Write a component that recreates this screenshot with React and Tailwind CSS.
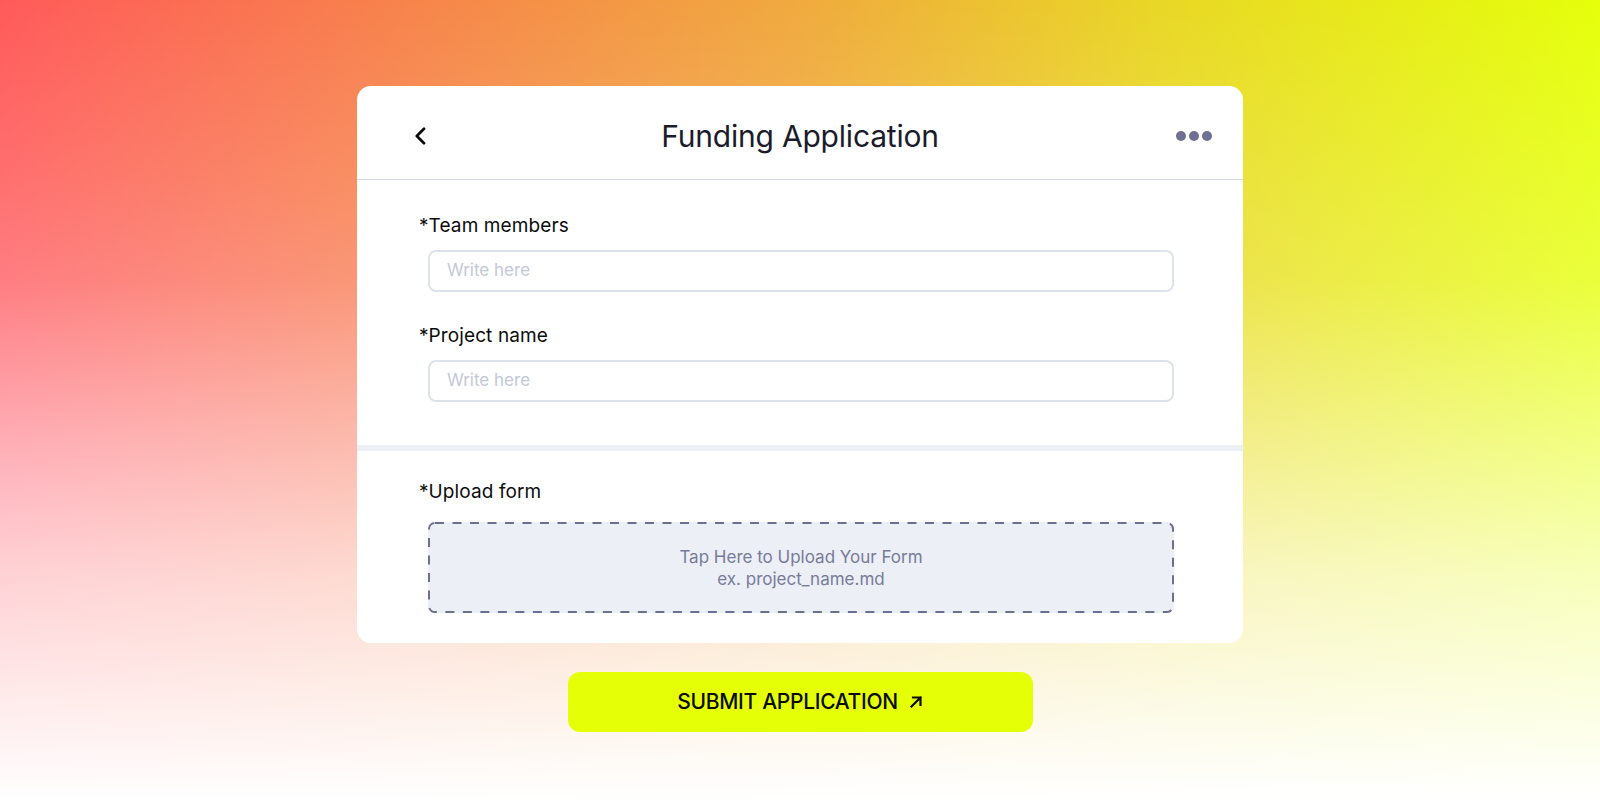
import React from "react";

function Chevron() {
  return (
    <svg width="12" height="18" viewBox="0 0 12 18" fill="none">
      <path d="M10 1.8 L2.8 9 L10 16.2" stroke="#0b0b0b" strokeWidth="2.7" strokeLinecap="round" strokeLinejoin="round" />
    </svg>
  );
}

function Dots() {
  return (
    <div className="flex items-center gap-[3px]">
      <span className="block w-[10px] h-[10px] rounded-full bg-[#6e7192]" />
      <span className="block w-[10px] h-[10px] rounded-full bg-[#6e7192]" />
      <span className="block w-[10px] h-[10px] rounded-full bg-[#6e7192]" />
    </div>
  );
}

function Arrow() {
  return (
    <svg width="14" height="14" viewBox="0 0 14 14" fill="none">
      <path d="M2.5 11.5 L11.5 2.5 M4 2.5 H11.5 V10" stroke="#0b0b0b" strokeWidth="2.2" strokeLinecap="square" />
    </svg>
  );
}

function Field({ label, top }) {
  return (
    <div className={top}>
      <div className="text-[19px] leading-[24px] font-normal tracking-[0.1px] text-[#0c0c0c]">{label}</div>
      <div className="mt-[12px] ml-[9px] w-[746px] h-[42px] rounded-[8px] border-2 border-[#dde2ec] flex items-center pl-[17px]">
        <span className="text-[17px] text-[#c3c9d8]">Write here</span>
      </div>
    </div>
  );
}

export default function App() {
  return (
    <div
      className="min-h-screen w-full flex flex-col items-center pt-[86px] pb-[68px] bg-[linear-gradient(to_bottom,rgba(255,255,255,0)_0%,rgba(255,255,255,0.2)_35%,rgba(255,255,255,0.72)_72%,#ffffff_100%),radial-gradient(ellipse_at_0%_60%,rgba(255,110,160,0.35),rgba(255,110,160,0)_45%),linear-gradient(to_right,#ff5a5a_0%,#f7834b_25%,#f0aa3e_50%,#e9d626_72%,#e5ff0a_100%)]"
      style={{ fontFamily: "Inter, 'Noto Sans', sans-serif" }}
    >
      <div className="w-[886px] bg-white rounded-[14px] overflow-hidden">
        <div className="h-[94px] border-b border-[#d5d9e4] grid grid-cols-[1fr_auto_1fr] items-center px-[31px] pt-[7px]">
          <div className="flex items-center pl-[26px]">
            <Chevron />
          </div>
          <div className="text-[30px] leading-[36px] text-[#1b1b2b] tracking-[-0.2px]">Funding Application</div>
          <div className="flex justify-end">
            <Dots />
          </div>
        </div>
        <div className="pl-[62px] pt-[34px] pb-[43px]">
          <Field label="*Team members" top="" />
          <Field label="*Project name" top="mt-[32px]" />
        </div>
        <div className="h-[6px] bg-[#edf1f6]" />
        <div className="pl-[62px] pt-[29px] pb-[30px]">
          <div className="text-[19px] leading-[24px] font-normal tracking-[0.1px] text-[#0c0c0c]">*Upload form</div>
          <div className="relative mt-[18px] ml-[9px] w-[746px] h-[91px] rounded-[7px] bg-[#eceff5] flex flex-col items-center justify-center text-[17px] leading-[22px] text-[#777b9b]">
            <svg className="absolute inset-0" width="746" height="91" viewBox="0 0 746 91" fill="none">
              <rect x="1" y="1" width="744" height="89" rx="6" stroke="#6b7090" strokeWidth="2" strokeDasharray="9 8.5" />
            </svg>
            <span className="relative">Tap Here to Upload Your Form</span>
            <span className="relative">ex. project_name.md</span>
          </div>
        </div>
      </div>
      <button className="mt-[29px] w-[465px] h-[60px] rounded-[12px] bg-[#e5ff07] flex items-center justify-center gap-[11px]">
        <span className="text-[21px] font-medium text-[#0b0b0b] tracking-[-0.3px]">SUBMIT APPLICATION</span>
        <Arrow />
      </button>
    </div>
  );
}
